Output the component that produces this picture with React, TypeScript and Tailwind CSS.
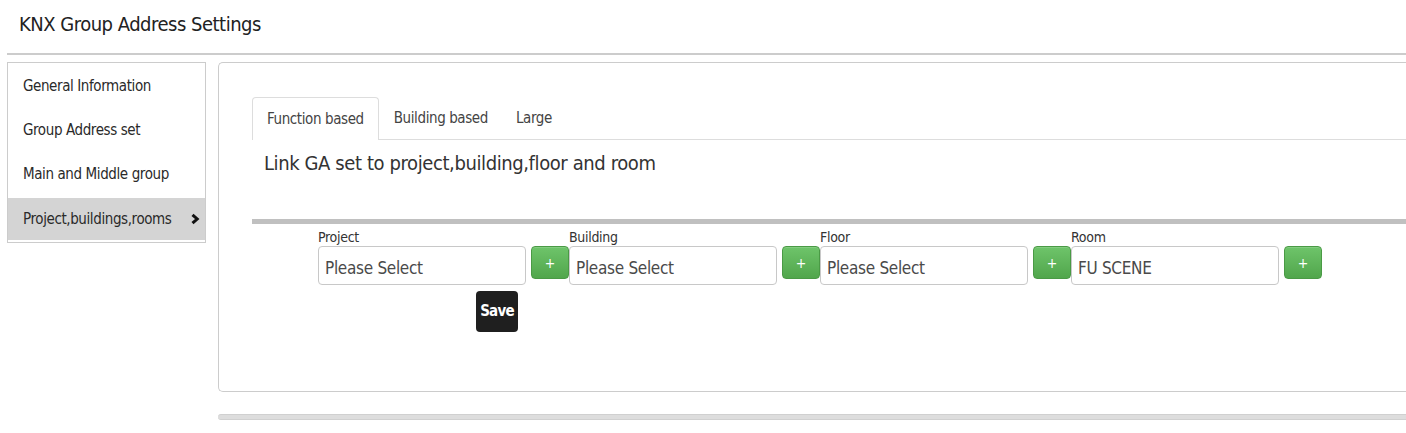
import React from "react";

const NAV = [
  "General Information",
  "Group Address set",
  "Main and Middle group",
  "Project,buildings,rooms",
];

const FIELDS = [
  { label: "Project", value: "Please Select" },
  { label: "Building", value: "Please Select" },
  { label: "Floor", value: "Please Select" },
  { label: "Room", value: "FU SCENE" },
];

function PlusButton() {
  return (
    <button className="w-[38px] h-[33px] rounded-[4px] border border-[#4a9a45] bg-gradient-to-b from-[#6ec46a] to-[#51a64c] text-white text-[14px] leading-none flex items-center justify-center shadow-[inset_0_1px_0_rgba(255,255,255,0.15)]">
      +
    </button>
  );
}

export default function App() {
  return (
    <div className="w-[1406px] h-[433px] overflow-hidden bg-white text-[#333] font-['Liberation_Sans_Narrow','DejaVu_Sans_Condensed',sans-serif]">
      <h1 className="h-[53px] pl-[19px] pt-[10px] text-[20px] tracking-[-0.5px] leading-[28px] text-[#222]">
        KNX Group Address Settings
      </h1>
      <div className="ml-[7px] h-[2px] bg-[#cccccc]" />

      <div className="flex items-start gap-[12px] mt-[7px] ml-[7px]">
        {/* side nav */}
        <div className="w-[199px] border border-[#cccccc] pt-[1px] pb-[2px] shrink-0">
          {NAV.map((item, i) => {
            const active = i === NAV.length - 1;
            return (
              <div
                key={item}
                className={
                  active
                    ? "h-[42px] mt-[2px] pl-[15px] pr-[5px] flex items-center justify-between bg-[#d4d4d4] text-[15px] tracking-[-0.4px] text-[#2a2a2a]"
                    : "h-[44px] pl-[15px] flex items-center text-[15px] tracking-[-0.4px] text-[#2a2a2a]"
                }
              >
                <span>{item}</span>
                {active && (
                  <svg width="10" height="12" viewBox="0 0 10 12">
                    <path d="M2.5 1.8 L7.2 6 L2.5 10.2" fill="none" stroke="#111" strokeWidth="3" strokeLinejoin="miter" />
                  </svg>
                )}
              </div>
            );
          })}
        </div>

        {/* main panel */}
        <div className="flex-1 h-[330px] border border-r-0 border-[#cccccc] rounded-l-[5px] pt-[34px] pl-[33px]">
          <div className="flex items-end h-[43px] border-b border-[#dddddd] text-[15px] tracking-[-0.4px]">
            <div className="h-[43px] px-[14px] flex items-center border border-b-0 border-[#dddddd] rounded-t-[4px] bg-white -mb-px text-[#444]">
              Function based
            </div>
            <div className="h-[42px] px-[15px] flex items-center text-[#444]">Building based</div>
            <div className="h-[42px] px-[13px] flex items-center text-[#444]">Large</div>
          </div>

          <h2 className="pl-[12px] mt-[10px] text-[20px] tracking-[-0.4px] leading-[26px] text-[#333]">
            Link GA set to project,building,floor and room
          </h2>

          <div className="mt-[43px] h-[5px] bg-[#c0c0c0]" />

          <div className="flex pl-[66px] mt-[4px]">
            {FIELDS.map((f) => (
              <div key={f.label} className="w-[251px] shrink-0">
                <div className="text-[14px] tracking-[-0.3px] leading-[18px] text-[#333]">{f.label}</div>
                <div className="flex items-start gap-[5px]">
                  <div className="w-[208px] h-[39px] border border-[#c8c8c8] rounded-[4px] px-[6px] flex items-center pt-[7px] text-[17px] tracking-[-0.3px] text-[#4a4a4a] bg-white">
                    {f.value}
                  </div>
                  <PlusButton />
                </div>
              </div>
            ))}
          </div>

          <div className="pl-[224px] mt-[6px]">
            <button className="w-[42px] h-[41px] rounded-[4px] bg-[#1f1f1f] text-white font-bold text-[15px] tracking-[-0.8px]">
              Save
            </button>
          </div>
        </div>
      </div>

      <div className="ml-[218px] mt-[22px] h-[6px] rounded-l-full bg-[#dddddd] border-y border-[#d0d0d0]" />
    </div>
  );
}
